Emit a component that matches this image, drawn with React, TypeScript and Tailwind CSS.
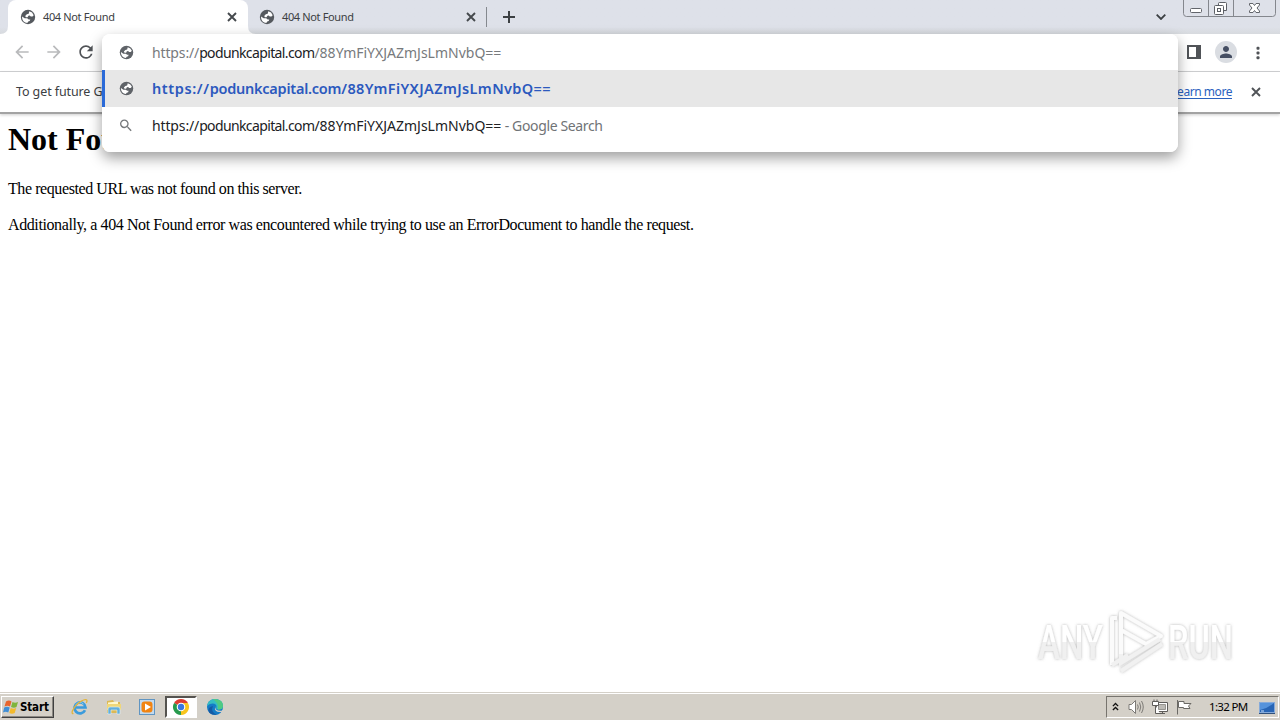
import type { ReactNode } from "react";
import { MdArrowBack, MdArrowForward, MdRefresh, MdSearch, MdPerson } from "react-icons/md";

function Globe({ className }: { className: string }) {
  return (
    <svg viewBox="0 0 16 16" className={className}>
      <circle cx="8" cy="8" r="7.200" fill="currentColor" />
      <path
        d="M9.300 2.300Q12.600 3 13.700 6.200L12.500 7.500H10.800L9.700 6.400L8.400 6.700L7.600 8.200H5.900L5.200 7L6.800 5.200L8.700 4.700Z"
        fill="#fff"
      />
      <path
        d="M2.100 7.400L4.600 9.200H7.200L8.700 10.400L10.300 10.500L9.700 12L8.200 12.500L7.300 13.900Q2.700 13.300 2.100 8.900Z"
        fill="#fff"
      />
    </svg>
  );
}

function Cross({ className }: { className: string }) {
  return (
    <svg viewBox="0 0 10 10" className={className} stroke="currentColor" fill="none">
      <path d="M1 1L9 9M9 1L1 9" strokeWidth="1.9" />
    </svg>
  );
}

function Tab({ active }: { active?: boolean }) {
  return (
    <div
      className={
        active
          ? "relative flex h-[34px] w-[240px] items-center rounded-t-lg bg-white pl-3 pr-[11px]"
          : "flex h-[34px] w-[239px] items-center pl-[11px] pr-[11px]"
      }
    >
      {active && (
        <svg className="absolute -left-2 bottom-0 h-2 w-64" viewBox="0 0 256 8">
          <path d="M0 8Q8 8 8 0V8ZM248 0Q248 8 256 8H248Z" fill="#fff" />
        </svg>
      )}
      <Globe className="size-4 text-[#55595e]" />
      <span className="ml-[7px] flex-1 whitespace-nowrap text-[11px] tracking-[-0.36px] text-[#3c4043]">
        404 Not Found
      </span>
      <Cross className="size-[10px] text-[#45494d]" />
    </div>
  );
}

function WindowButtons() {
  return (
    <svg className="ml-[14px] h-[17px] w-[94px] self-start" viewBox="0 0 94 17" fill="none">
      <path d="M.5 0V13.5Q.5 16.5 3.5 16.5H89.5Q92.5 16.5 92.5 13.5V0M25.500 0V16M50.500 0V16" stroke="#84878d" />
      <rect x="7.500" y="8.500" width="11" height="4" rx="1" fill="#fff" stroke="#62656b" />
      <path d="M35.500 5V3.500Q35.500 2.500 36.500 2.500H42.500Q43.500 2.500 43.500 3.500V10.500H41M32.500 5.500H39.500Q40.500 5.500 40.500 6.500V13.500Q40.500 14.500 39.500 14.500H32.500Q31.500 14.500 31.500 13.500V6.500Q31.500 5.500 32.500 5.500Z" fill="#fff" stroke="#5c5f65" />
      <rect x="34.500" y="8.500" width="3" height="3" stroke="#5c5f65" />
      <path d="M66.500 3.500H70L71.500 5.500L73 3.500H76.500V5L74 8L76.500 11V12.500H73L71.500 10.500L70 12.500H66.500V11L69 8L66.500 5Z" fill="#fff" stroke="#62656b" />
    </svg>
  );
}

function TabStrip() {
  return (
    <div className="flex h-[34px] items-center bg-[#dee1e8] bg-linear-to-b from-[#dee1e9] from-80% to-[#d7dade] pl-2">
      <Tab active />
      <Tab />
      <div className="-ml-px h-5 w-px bg-[#85898f]" />
      <svg viewBox="0 0 12 12" className="ml-4 size-3 text-[#3c4043]">
        <path d="M6 0V12M0 6H12" stroke="currentColor" strokeWidth="2" />
      </svg>
      <div className="flex-1" />
      <svg viewBox="0 0 10 6" className="h-[6px] w-[10px]" fill="none">
        <path d="M.7.7L5 5L9.300.7" stroke="#3c4043" strokeWidth="1.8" />
      </svg>
      <div className="w-[3px]" />
      <WindowButtons />
      <div className="w-[3px]" />
    </div>
  );
}

function Toolbar() {
  return (
    <div className="flex h-[38px] items-center border-b border-[#d2d3d5] bg-white pb-px pl-[12px]">
      <MdArrowBack className="size-5 text-[#b9babc]" />
      <MdArrowForward className="ml-3 size-5 text-[#b9babc]" />
      <MdRefresh className="ml-[12px] size-5 text-[#505357]" />
      <div className="flex-1" />
      <svg viewBox="0 0 14 14" className="size-[14px]">
        <path d="M0 0H14V14H0ZM2 2V12H9V2Z" fill="#505357" fillRule="evenodd" />
      </svg>
      <div className="ml-[14px] flex size-[22px] items-center justify-center rounded-full bg-[#dadde2]">
        <MdPerson className="size-[18px] text-[#454e62]" />
      </div>
      <svg viewBox="0 0 4 14" className="ml-[19px] mr-5 mt-px h-[14px] w-1" fill="#505357">
        <rect x=".5" y=".8" width="3" height="3" rx="1" />
        <rect x=".5" y="5.500" width="3" height="3" rx="1" />
        <rect x=".5" y="10.200" width="3" height="3" rx="1" />
      </svg>
    </div>
  );
}

function InfoBar() {
  return (
    <div className="flex h-[42px] items-center border-b-2 border-[#a3a3a3] bg-white pl-4 text-[12.500px] text-[#3c4043] shadow-[0_1px_3px_rgba(0,0,0,0.2)]">
      <span className="whitespace-nowrap tracking-[-0.1px]">To get future G</span>
      <span className="flex-1" />
      <a className="whitespace-nowrap text-[12px] tracking-[-0.45px] text-[#2a61be] underline underline-offset-2">
        Learn more
      </a>
      <Cross className="ml-[19px] mr-[19px] size-[10px] text-[#505357]" />
    </div>
  );
}

function Row({ icon, children, className }: { icon: ReactNode; children: ReactNode; className: string }) {
  return (
    <div className={className}>
      <div className="flex w-4 justify-center">{icon}</div>
      <div className="ml-[18px] flex whitespace-pre">{children}</div>
    </div>
  );
}

function Omnibox() {
  return (
    <div className="absolute left-[102px] top-[34px] h-[118px] w-[1076px] overflow-hidden rounded-lg bg-white text-[14px]">
      <Row icon={<Globe className="size-[15px] text-[#5f6368]" />} className="flex h-9 items-center pl-4 pt-px text-[#777a7d]">
        <span className="tracking-[-0.14px]">https://</span>
        <span className="tracking-[-0.62px] text-[#202124]">podunkcapital.com</span>
        <span>/88YmFiYXJAZmJsLmNvbQ==</span>
      </Row>
      <Row
        icon={<Globe className="size-[15px] text-[#5f6368]" />}
        className="flex h-[37px] items-center border-l-[3px] border-[#2a6ad8] bg-[#e7e7e7] pl-[13px] text-[14.500px] font-semibold text-[#2c59be]"
      >
        <span className="tracking-[0.6px]">https://</span>
        <span className="tracking-[-0.24px]">podunkcapital.com</span>
        <span className="tracking-[0.38px]">/88YmFiYXJAZmJsLmNvbQ==</span>
      </Row>
      <Row
        icon={<MdSearch className="size-[17px] text-[#75787b]" />}
        className="flex h-[37px] items-center pl-4 text-[#202124]"
      >
        <span className="tracking-[-0.14px]">https://</span>
        <span className="tracking-[-0.62px]">podunkcapital.com</span>
        <span>/88YmFiYXJAZmJsLmNvbQ==</span>
        <span className="tracking-[-0.36px] text-[#707376]"> - Google Search</span>
      </Row>
    </div>
  );
}

function Watermark() {
  return (
    <div className="absolute left-[1034px] top-[605px] flex h-[72px] w-[204px] items-center text-white">
      <svg viewBox="0 0 204 72" className="h-[72px] w-[204px] overflow-visible">
        <defs>
          <filter id="glow" x="-10%" y="-20%" width="120%" height="140%">
            <feDropShadow dx="0" dy="0" stdDeviation="1.6" floodColor="#777" floodOpacity=".55" />
          </filter>
          <linearGradient id="fade" x1="0" y1="0" x2="0" y2="1">
            <stop offset=".5" stopColor="#fff" />
            <stop offset=".5" stopColor="#f0f0f0" />
          </linearGradient>
        </defs>
        <g filter="url(#glow)" fill="url(#fade)" fontFamily="Roboto, sans-serif" fontSize="49" fontWeight="500">
          <text x="4" y="54" textLength="65" lengthAdjust="spacingAndGlyphs">ANY</text>
          <text x="134" y="54" textLength="65" lengthAdjust="spacingAndGlyphs">RUN</text>
        </g>
        <g filter="url(#glow)" fill="none" stroke="#fbfbfb" strokeWidth="4">
          <path d="M83 13H78V60M87 49V8L127 31L112 39L87 25" strokeLinejoin="round" />
          <path d="M78 60L94 50M87 66L128 39" stroke="#f1f1f1" />
          <path d="M87 49V58L126 34" stroke="#f1f1f1" />
        </g>
      </svg>
    </div>
  );
}

function StartButton() {
  return (
    <div className="flex h-[22px] w-[53px] items-center border border-b-[#404040] border-l-white border-r-[#404040] border-t-white bg-[#d4d0c8] pl-px shadow-[inset_-1px_-1px_0_#8b8882]">
      <svg viewBox="0 0 16 16" className="size-4">
        <path d="M3 2.500Q6 .5 8.500 2.500L7 7.500Q4.500 6 1.500 7.500Z" fill="#e7642c" />
        <path d="M9.500 3Q12 4.500 15 3L13.500 8Q11 9.500 8 8Z" fill="#7fb43b" />
        <path d="M1.200 8.500Q4 7 6.700 8.500L5.300 13.500Q2.500 12 0 13.500Z" fill="#3f8ed5" />
        <path d="M7.700 9Q10.500 10.500 13.200 9L11.700 14Q9 15.500 6.300 14Z" fill="#f3ba2c" />
      </svg>
      <span className="ml-px mt-px font-['DejaVu_Sans_Condensed','DejaVu_Sans',sans-serif] text-[11.500px] font-bold tracking-[-0.15px] text-black">
        Start
      </span>
    </div>
  );
}

function IeIcon() {
  return (
    <svg viewBox="0 0 18 18" className="size-[18px]" fill="none">
      <path d="M14 12.200A5.500 5.500 0 1 1 14.500 9.500H5" stroke="#3b9bdc" strokeWidth="2.700" />
      <path d="M4.500 7.500A4.800 4.800 0 0 1 12.500 6" stroke="#8cd0f2" strokeWidth="1" />
      <path d="M2.500 15.500C-.5 16.500 1.500 10 7 5.500S18 0 15.300 5" stroke="#e3b43b" strokeWidth="1.300" />
    </svg>
  );
}

function FolderIcon() {
  return (
    <svg viewBox="0 0 18 18" className="size-[18px]">
      <path d="M2 3L8 2L9 4H15V15H2Z" fill="#dcb955" />
      <path d="M3 4.500L13 3.500V8H3Z" fill="#fff8cb" />
      <path d="M2 6H16V12H2Z" fill="#f0d778" />
      <path d="M3 16V11Q3 9 5 9H13Q15 9 15 11V16H12V12H6V16Z" fill="#62aedb" stroke="#dff1fa" strokeWidth=".6" />
    </svg>
  );
}

function MediaIcon() {
  return (
    <svg viewBox="0 0 18 18" className="size-[18px]">
      <rect x="1.500" y="1.500" width="15" height="15" fill="#c3daee" stroke="#6095c2" />
      <rect x="3.500" y="3.500" width="11" height="11" rx="3" fill="#f18412" />
      <path d="M7 5.500L13 9L7 12.500Z" fill="#fff" />
    </svg>
  );
}

function ChromeIcon() {
  return (
    <svg viewBox="0 0 18 18" className="size-[18px]">
      <path d="M9 9L2.070 5A8 8 0 0 1 15.930 5Z" fill="#dd3d31" />
      <path d="M9 9L15.930 5A8 8 0 0 1 9 17Z" fill="#f8c51d" />
      <path d="M9 9L9 17A8 8 0 0 1 2.070 5Z" fill="#279a4d" />
      <path d="M9 5H15.930L12.500 11L9 17L10 12Z" fill="#f8c51d" />
      <path d="M2.070 5L5.500 11L9 13L7 9Z" fill="#279a4d" />
      <circle cx="9" cy="9" r="4.300" fill="#fff" />
      <circle cx="9" cy="9" r="3.200" fill="#3977df" />
    </svg>
  );
}

function EdgeIcon() {
  return (
    <svg viewBox="0 0 18 18" className="size-[18px]">
      <circle cx="9" cy="9" r="8" fill="#147bc6" />
      <path d="M1.100 8C2 3 5 1 9 1Q17 1.500 17 8Q16.500 12 12 11.500Q9.500 11 10.500 9C11 5 5 4 1.100 8Z" fill="#35bdc2" />
      <path d="M9 1Q17 1.500 17 8Q16.500 12 12 11.500Q13 5 7 1.200Z" fill="#4fca83" />
      <path d="M7 8Q4 14 11 16.700Q4 17.500 2.500 13Q2 9 7 8Z" fill="#155aa4" />
      <path d="M9.500 8Q8 13 15.500 12.700L17.500 11.500V13L15.500 14Q7 14.500 9.500 8Z" fill="#d4d0c8" />
    </svg>
  );
}

function Tray() {
  return (
    <div className="flex h-[22px] w-[173px] items-center border border-b-white border-l-[#77746e] border-r-white border-t-[#77746e]">
      <svg viewBox="0 0 8 10" className="ml-[5px] mb-px h-[10px] w-[7px]" fill="none" stroke="#111" strokeWidth="1.500">
        <path d="M1 4L4 1L7 4M1 8.500L4 5.500L7 8.500" />
      </svg>
      <svg viewBox="0 0 16 16" className="ml-[9px] size-4" fill="none" stroke="#7c7a76">
        <path d="M1 5.500H3.500L7.500 1.500V14.500L3.500 10.500H1Z" fill="#fff" />
        <path d="M9.500 5.500Q11 8 9.500 10.500M11.500 3.500Q14 8 11.500 12.500M13.500 2Q17 8 13.500 14" />
      </svg>
      <svg viewBox="0 0 16 16" className="ml-2 size-4" fill="none" stroke="#5f5d5a">
        <path d="M4.500 3.500H15.500V12.500H4.500ZM7 14.500H13M10.500 12.500V14.500" fill="#fff" />
        <path d="M6.500 5.500H13.500V10.500H6.500Z" fill="#bcbab5" stroke="#96948f" />
        <path d="M.5 2.500H6.500V6.500H.5ZM2 .5V2.500M5 .5V2.500M3.500 6.500V14.500H8" fill="#fff" />
      </svg>
      <svg viewBox="0 0 16 16" className="ml-2 size-4" fill="#fff" stroke="#6b6965">
        <path d="M1.500 1V15.500M2.500 2.500H8V4.500H15L12.500 7L14 9.500H7.500V8.500H2.500Z" />
      </svg>
      <span className="ml-[17px] w-[41px] whitespace-nowrap text-[11.500px] tracking-[-0.65px] text-black">1:32 PM</span>
      <svg viewBox="0 0 16 14" className="ml-[9px] mt-px h-[14px] w-4">
        <rect x=".5" y="1.500" width="15" height="10" fill="#2865b5" stroke="#85aada" />
        <path d="M1 9Q8 8 15 2V2H1Z" fill="#5593dc" />
        <path d="M0 12H16V13H0Z" fill="#31517b" />
        <path d="M2 10H5" stroke="#c8e2fb" />
      </svg>
    </div>
  );
}

function Taskbar() {
  return (
    <div className="flex h-[28px] items-center border-t border-[#d4d0c8] bg-[#d4d0c8] pl-px pt-px shadow-[inset_0_1px_0_#fff]">
      <StartButton />
      <div className="ml-[17px] flex flex-1 items-center">
        <IeIcon />
        <div className="w-4" />
        <FolderIcon />
        <div className="w-[15px]" />
        <MediaIcon />
        <div className="ml-[9px] flex h-[22px] w-8 items-center justify-center border-2 border-b-white border-l-[#55534f] border-r-white border-t-[#55534f] bg-white">
          <ChromeIcon />
        </div>
        <div className="w-[9px]" />
        <EdgeIcon />
      </div>
      <Tray />
      <div className="w-px" />
    </div>
  );
}

export default function App() {
  return (
    <div className="relative flex h-[720px] w-[1280px] flex-col overflow-hidden bg-white font-['Noto_Sans',sans-serif]">
      <TabStrip />
      <Toolbar />
      <InfoBar />
      <main className="relative flex-1 pl-2 font-['Liberation_Serif',serif] text-black">
        <h1 className="mt-[6px] whitespace-nowrap text-[32px] font-bold leading-[38px]">Not Found</h1>
        <p className="mt-[22px] text-[16px] leading-[18px] tracking-[-0.42px]">The requested URL was not found on this server.</p>
        <p className="mt-[18px] text-[16px] leading-[18px] tracking-[-0.4px]">
          Additionally, a 404 Not Found error was encountered while trying to use an ErrorDocument to handle the request.
        </p>
      </main>
      <Taskbar />
      <div className="absolute left-[102px] top-[34px] h-[118px] w-[1076px] rounded-lg shadow-[0_6px_14px_rgba(0,0,0,0.38)]" />
      <Omnibox />
      <Watermark />
    </div>
  );
}
